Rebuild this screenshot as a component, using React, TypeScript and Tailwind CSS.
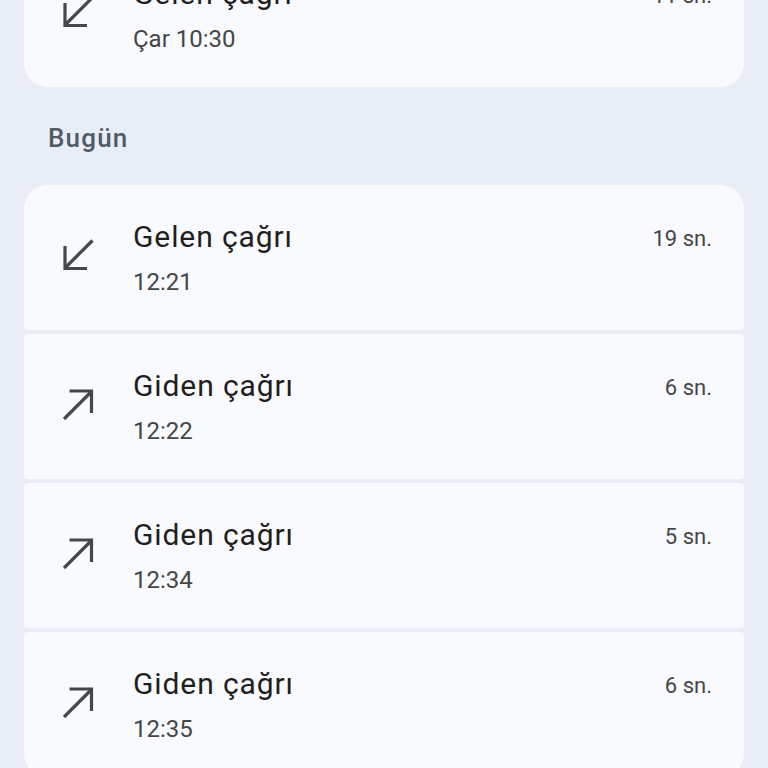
import React from "react";

type Call = { dir: "in" | "out"; title: string; time: string; dur: string };

function InIcon() {
  return (
    <svg width="48" height="48" viewBox="0 0 48 48" fill="none" stroke="#45474a" strokeWidth="3.2">
      <line x1="38.5" y1="9.5" x2="12" y2="36" />
      <polyline points="11,15 11,37.5 33,37.5" strokeLinejoin="miter" />
    </svg>
  );
}

function OutIcon() {
  return (
    <svg width="48" height="48" viewBox="0 0 48 48" fill="none" stroke="#45474a" strokeWidth="3.2">
      <line x1="10" y1="39" x2="37" y2="12" />
      <polyline points="15.5,11 37.5,11 37.5,33" strokeLinejoin="miter" />
    </svg>
  );
}

function Item({ c, cls }: { c: Call; cls: string }) {
  return (
    <div className={`h-[145px] bg-[#f8fafd] flex items-center pl-[30px] pr-[32px] ${cls}`}>
      <div className="w-[48px] h-[48px] mt-[-6px] shrink-0">{c.dir === "in" ? <InIcon /> : <OutIcon />}</div>
      <div className="ml-[31px] flex-1 flex flex-col gap-[9px]">
        <div className="flex items-center justify-between">
          <span className="text-[30px] leading-[36px] tracking-[0.9px] text-[#1f1f1f]">{c.title}</span>
          <span className="text-[22px] leading-[36px] text-[#444746] mt-[4px]">{c.dur}</span>
        </div>
        <div className="text-[24px] leading-[32px] text-[#444746]">{c.time}</div>
      </div>
    </div>
  );
}

export default function App() {
  const today: Call[] = [
    { dir: "in", title: "Gelen çağrı", time: "12:21", dur: "19 sn." },
    { dir: "out", title: "Giden çağrı", time: "12:22", dur: "6 sn." },
    { dir: "out", title: "Giden çağrı", time: "12:34", dur: "5 sn." },
    { dir: "out", title: "Giden çağrı", time: "12:35", dur: "6 sn." },
  ];
  return (
    <div
      className="w-full h-[768px] overflow-hidden bg-[#e9eef6] px-[24px]"
      style={{ fontFamily: "Roboto, 'Noto Sans', sans-serif" }}
    >
      <div className="mt-[-58px]">
        <Item c={{ dir: "in", title: "Gelen çağrı", time: "Çar 10:30", dur: "11 sn." }} cls="rounded-t-[4px] rounded-b-[24px]" />
      </div>
      <div className="mt-[35px] mb-[31px] pl-[24px] text-[26px] leading-[32px] font-medium tracking-[1.2px] text-[#4f5b67]">Bugün</div>
      <div className="flex flex-col gap-[4px]">
        {today.map((c, i) => (
          <Item
            key={i}
            c={c}
            cls={i === 0 ? "rounded-t-[24px] rounded-b-[4px]" : i === today.length - 1 ? "rounded-t-[4px] rounded-b-[24px]" : "rounded-[4px]"}
          />
        ))}
      </div>
    </div>
  );
}
